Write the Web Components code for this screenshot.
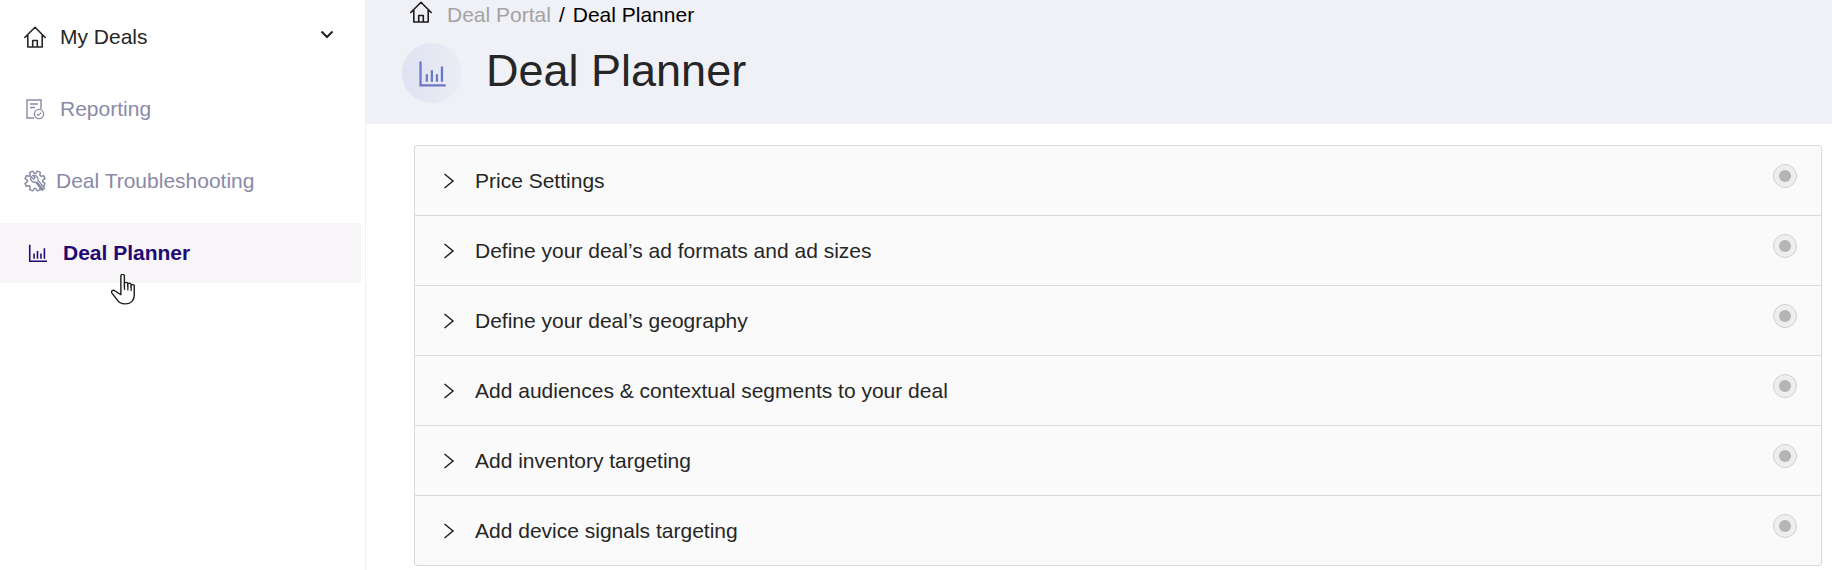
<!DOCTYPE html>
<html lang="en">
<head>
<meta charset="utf-8">
<title>Deal Planner</title>
<style>
  html, body { margin: 0; height: 570px; overflow: hidden; background: #fff; }
  body { font-family: "Liberation Sans", Arial, sans-serif; }
</style>
</head>
<body>
<deal-app>
  <side-nav slot="nav">
    <nav-item icon="home" chevron>My Deals</nav-item>
    <nav-item icon="report" muted>Reporting</nav-item>
    <nav-item icon="gear" muted tight>Deal Troubleshooting</nav-item>
    <nav-item icon="chart" active>Deal Planner</nav-item>
  </side-nav>
  <page-header slot="header" title="Deal Planner"></page-header>
  <deal-accordion slot="content">
    <accordion-row>Price Settings</accordion-row>
    <accordion-row>Define your deal’s ad formats and ad sizes</accordion-row>
    <accordion-row>Define your deal’s geography</accordion-row>
    <accordion-row>Add audiences &amp; contextual segments to your deal</accordion-row>
    <accordion-row>Add inventory targeting</accordion-row>
    <accordion-row>Add device signals targeting</accordion-row>
  </deal-accordion>
</deal-app>

<script>
  // eight toothed gear outline, centred on 11,11
  function gearPath() {
    let d = "";
    for (let i = 0; i < 8; i++) {
      const a = i * Math.PI / 4 + Math.PI / 8;
      const pts = [[-0.3, 7.6], [-0.16, 10.2], [0.16, 10.2], [0.3, 7.6]];
      pts.forEach(([o, r]) => {
        const x = 11 + r * Math.cos(a + o), y = 11 + r * Math.sin(a + o);
        d += (d ? "L" : "M") + x.toFixed(2) + " " + y.toFixed(2);
      });
    }
    return d + "Z";
  }

  // icons shared by the nav and the header
  const HOME = `<path d="M.8 11.500 11 1.300l10.200 10.200M3.800 9.200V21h14.400V9.200M8.700 21v-6.500h4.600V21" fill="none" stroke="currentColor" stroke-width="1.600" stroke-linejoin="round" stroke-linecap="round"/>`;
  const CHART = `<path d="M2 1v19h20" fill="none" stroke="currentColor" stroke-width="1.800"/><path d="M7 11v6M11 8v9M15 11v6M19 5v12" fill="none" stroke="currentColor" stroke-width="1.800"/>`;
  const ICONS = {
    home: HOME,
    chart: CHART,
    report: `<path d="M10 20H3V2h14v9" fill="none" stroke="currentColor" stroke-width="1.400"/><path d="M6 6h8M6 9.500h5" fill="none" stroke="currentColor" stroke-width="1.400"/><circle cx="15" cy="16" r="4.600" fill="none" stroke="currentColor" stroke-width="1.300"/><path d="m13 16 1.500 1.500 2.600-2.800" fill="none" stroke="currentColor" stroke-width="1.100"/>`,
    gear: `<path d="${gearPath()}" fill="none" stroke="currentColor" stroke-width="1.500" stroke-linejoin="round"/><path d="M7 6.500a4 4 0 0 0 4.600 5.600l6.600 8.300 2.400-1.900-6.600-8.300A4 4 0 0 0 9 5.500l2.200 2.300-1.700 1.400z" fill="#fff" stroke="currentColor" stroke-width="1.300"/><path d="m12.500 12 6 7.500" stroke="currentColor" stroke-width="2.200"/>`
  };

  class DealApp extends HTMLElement {
    constructor() {
      super();
      this.attachShadow({ mode: "open" });
      this.shadowRoot.innerHTML = `
      <style>
        :host { display: grid; grid-template-columns: 366px 1fr; height: 570px; color: #262626; }
        .side { border-right: 1px solid #f0f1f6; position: relative; }
        main { min-width: 0; }
        .body { padding: 21px 10px 0 48px; }
        .cursor { position: absolute; left: 111px; top: 274px; width: 25px; height: 32px; }
      </style>
      <div class="side">
        <slot name="nav"></slot>
        <svg class="cursor" viewBox="0.500 0.500 21.500 31" preserveAspectRatio="none">
          <path d="M9 2.200c0-1.700 3-1.700 3 0v11l.1-3.400c0-1.600 2.800-1.600 2.800 0v3l.1-2.200c0-1.600 2.700-1.600 2.700 0v3l.1-1.700c0-1.600 2.700-1.600 2.700 0v9.300c0 4.600-2.600 8.300-7.500 8.300-4.500 0-6-2-8-5.200L1.300 19c-1.300-1.800.9-3.700 2.700-2.100L9 20.500z" fill="#fff" stroke="#1c1c1c" stroke-width="1.200" stroke-linejoin="round"/>
          <path d="M12.100 12v4M15 12.500v4M17.800 13.500v3.500" stroke="#1c1c1c" stroke-width="1" fill="none"/>
        </svg>
      </div>
      <main>
        <slot name="header"></slot>
        <div class="body"><slot name="content"></slot></div>
      </main>`;
    }
  }

  class SideNav extends HTMLElement {
    constructor() {
      super();
      this.attachShadow({ mode: "open" });
      this.shadowRoot.innerHTML = `
      <style>
        :host { display: flex; flex-direction: column; gap: 12px; padding: 7px 4px 0 0; }
      </style>
      <slot></slot>`;
    }
  }

  class NavItem extends HTMLElement {
    connectedCallback() {
      if (this.shadowRoot) return;
      this.attachShadow({ mode: "open" });
      const icon = this.getAttribute("icon");
      const chevron = this.hasAttribute("chevron")
        ? `<svg class="chev" viewBox="0 0 14 9"><path d="M1.500 1.500 7 7l5.500-5.500" fill="none" stroke="currentColor" stroke-width="2"/></svg>` : "";
      this.shadowRoot.innerHTML = `
      <style>
        :host { display: flex; align-items: center; height: 60px; padding-left: 24px; padding-right: 27px;
                font-size: 21px; color: #262626; }
        :host([muted]) { color: #8a8aa6; }
        :host([active]) { color: #1f0a72; font-weight: 700; background: #f7f5f8; padding-left: 28px; }
        .icon { width: 22px; height: 22px; flex: none; margin-right: 14px; }
        :host([tight]) .icon { margin-right: 10px; }
        :host([active]) .icon { width: 19px; height: 19px; margin-right: 16px; }
        .label { flex: 1; }
        .chev { width: 14px; height: 9px; color: #212121; position: relative; top: -3px; }
      </style>
      <svg class="icon" viewBox="0 0 22 22">${ICONS[icon]}</svg>
      <span class="label"><slot></slot></span>
      ${chevron}`;
    }
  }

  class PageHeader extends HTMLElement {
    connectedCallback() {
      if (this.shadowRoot) return;
      this.attachShadow({ mode: "open" });
      const title = this.getAttribute("title");
      this.shadowRoot.innerHTML = `
      <style>
        :host { display: block; height: 124px; box-sizing: border-box; background: #f0f1f6; padding-left: 36px; }
        .crumbs { display: flex; align-items: center; height: 29px; font-size: 21px; color: #000; padding-left: 8px; }
        .crumbs svg { width: 22px; height: 22px; margin-right: 15px; color: #1c1c1c; position: relative; top: -3px; }
        .crumbs .link { color: #a3a3a3; }
        .crumbs .sep { margin: 0 8px; }
        .title { display: flex; align-items: center; gap: 24px; margin-top: 14px; }
        .badge { width: 60px; height: 60px; border-radius: 50%; display: flex; align-items: center; justify-content: center;
                 background: linear-gradient(90deg, #dfe2f1, #ebedf5); color: #6a78c8; }
        .badge svg { width: 29px; height: 27px; }
        h1 { margin: 0; font-size: 45px; font-weight: 400; color: #262626; position: relative; top: -2px; }
      </style>
      <div class="crumbs">
        <svg viewBox="0 0 22 22">${HOME}</svg>
        <span class="link">Deal Portal</span><span class="sep">/</span><span>${title}</span>
      </div>
      <div class="title">
        <div class="badge"><svg viewBox="0 0 23 21">${CHART}</svg></div>
        <h1>${title}</h1>
      </div>`;
    }
  }

  class DealAccordion extends HTMLElement {
    constructor() {
      super();
      this.attachShadow({ mode: "open" });
      this.shadowRoot.innerHTML = `
      <style>
        :host { display: block; border: 1px solid #d9d9d9; border-radius: 3px; background: #fafafa; overflow: hidden; }
      </style>
      <slot></slot>`;
    }
  }

  class AccordionRow extends HTMLElement {
    constructor() {
      super();
      this.attachShadow({ mode: "open" });
      this.shadowRoot.innerHTML = `
      <style>
        :host { display: flex; align-items: center; height: 70px; box-sizing: border-box; padding: 0 24px 0 28px;
                font-size: 21px; color: #262626; position: relative; border-bottom: 1px solid #d9d9d9; }
        :host(:last-child) { border-bottom: 0; height: 69px; }
        .chev { width: 12px; height: 18px; margin-right: 20px; flex: none; }
        .label { flex: 1; }
        .radio { width: 24px; height: 24px; box-sizing: border-box; border: 1.500px solid #cfcfcf; border-radius: 50%;
                 background: #eee; display: flex; align-items: center; justify-content: center;
                 position: absolute; right: 24px; top: 18px; }
        .radio i { width: 12px; height: 12px; border-radius: 50%; background: #b5b5b5; }
      </style>
      <svg class="chev" viewBox="0 0 12 18"><path d="M1.500 2 10 9l-8.500 7" fill="none" stroke="#212121" stroke-width="1.500"/></svg>
      <span class="label"><slot></slot></span>
      <span class="radio"><i></i></span>`;
    }
  }

  customElements.define("deal-app", DealApp);
  customElements.define("side-nav", SideNav);
  customElements.define("nav-item", NavItem);
  customElements.define("page-header", PageHeader);
  customElements.define("deal-accordion", DealAccordion);
  customElements.define("accordion-row", AccordionRow);
</script>
</body>
</html>
